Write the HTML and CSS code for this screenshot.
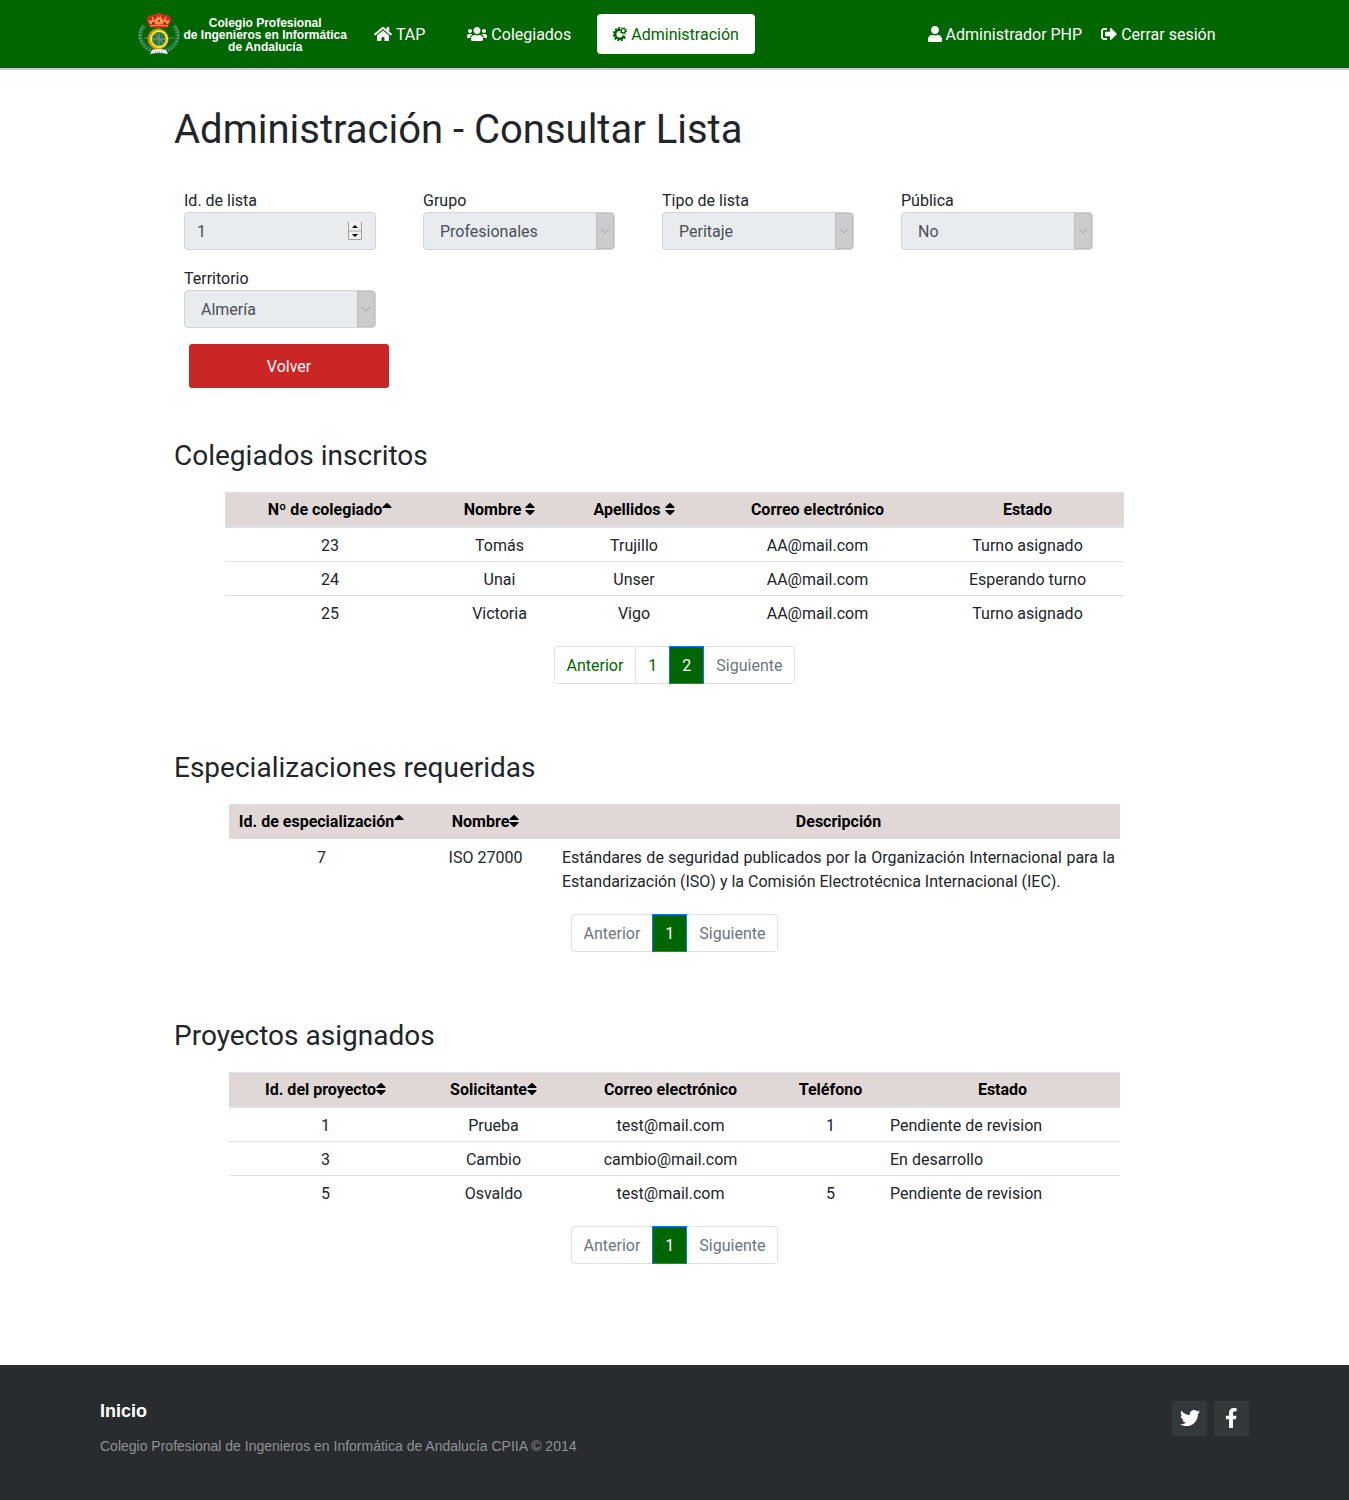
FILE: index.html
```html
<!DOCTYPE html>
<html lang="es">
<head>
<meta charset="utf-8">
<meta name="viewport" content="width=device-width, initial-scale=1">
<title>Administración - Consultar Lista</title>
<link rel="stylesheet" href="styles.css">
</head>
<body>
<svg class="sprite" aria-hidden="true">
  <symbol id="sort" viewBox="0 0 10 16"><path d="M1 7h8q1 0 .5-1L5.700 2.300q-.7-.6-1.400 0L.5 6Q0 7 1 7zM1 9h8q1 0 .5 1L5.700 13.700q-.7.6-1.400 0L.5 10Q0 9 1 9z"/></symbol>
  <symbol id="sort-up" viewBox="0 0 10 16"><path d="M1 7h8q1 0 .5-1L5.700 2.300q-.7-.6-1.400 0L.5 6Q0 7 1 7z"/></symbol>
</svg>

<header class="topbar">
  <div class="topbar-inner">
    <a class="brand" href="#">
      <svg class="brand-emblem" viewBox="0 0 42 44" aria-hidden="true">
        <g fill="none" stroke="#3d8f5f" stroke-width="4" stroke-dasharray="2 1">
          <path d="M6 14C-1 22 2 34 15 39"/><path d="M36 14C43 22 40 34 27 39"/>
        </g>
        <g fill="none" stroke="#8fc0a0" stroke-width="1" stroke-dasharray="1 2">
          <path d="M4 15C-1 23 1 35 14 40"/><path d="M38 15C43 23 41 35 28 40"/>
        </g>
        <path d="M12 15L9 8Q9 3 14 3L19 2 21 0l2 2 5 1q5 0 5 5l-3 7q-9 2-18 0z" fill="#d62a1c"/>
        <path d="M10 8l3 1 1-5 3 5 2-6 2 3 2-3 2 6 3-5 1 5 3-1-2 4H12z" fill="#e8a04a"/>
        <path d="M12 7h2M17 5h2M23 5h2M28 7h2M14 11h3M20 9h2M25 11h3" stroke="#e01818" stroke-width="2"/>
        <path d="M12 14q9-2 18 0" fill="none" stroke="#f3c04c" stroke-width="1"/>
        <path d="M6 26h30M21 15v23" stroke="#6a8a8c" stroke-width="1"/>
        <circle cx="20" cy="27" r="9" fill="#2a7a48" stroke="#d98b18" stroke-width="3"/>
        <path d="M14 27h14M21 21v13M17 22l8 9" stroke="#7f9a96" stroke-width="1"/>
        <circle cx="21" cy="27" r="8" fill="none" stroke="#f8ea1c" stroke-width="2"/>
        <path d="M14 38q7-2 14 0l2 4q-9-2-18 0z" fill="#eee"/>
        <path d="M17 40h8" stroke="#666" stroke-dasharray="1 1"/>
      </svg>
      <span class="brand-name">Colegio Profesional<br>de Ingenieros en Informática<br>de Andalucía</span>
    </a>
    <nav class="nav">
      <a class="nav-link" href="#"><svg class="icon icon-18" viewBox="0 0 576 512" aria-hidden="true"><path d="M280.370 148.260L96 300.110V464a16 16 0 0 0 16 16l112.060-.29a16 16 0 0 0 15.920-16V368a16 16 0 0 1 16-16h64a16 16 0 0 1 16 16v95.640a16 16 0 0 0 16 16.050L464 480a16 16 0 0 0 16-16V300L295.670 148.260a12.190 12.190 0 0 0-15.300 0zM571.600 251.470L488 182.560V44.050a12 12 0 0 0-12-12h-56a12 12 0 0 0-12 12v72.610L318.470 43a48 48 0 0 0-61 0L4.340 251.470a12 12 0 0 0-1.600 16.900l25.500 31A12 12 0 0 0 45.150 301l235.220-193.740a12.190 12.190 0 0 1 15.300 0L530.900 301a12 12 0 0 0 16.900-1.600l25.500-31a12 12 0 0 0-1.700-16.930z"/></svg>TAP</a>
      <a class="nav-link" href="#"><svg class="icon icon-20" viewBox="0 0 640 512" aria-hidden="true"><path d="M96 224c35.300 0 64-28.700 64-64s-28.700-64-64-64-64 28.700-64 64 28.700 64 64 64zm448 0c35.300 0 64-28.700 64-64s-28.700-64-64-64-64 28.700-64 64 28.700 64 64 64zm32 32h-64c-17.600 0-33.500 7.100-45.100 18.600 40.300 22.100 68.900 62 75.100 109.400h66c17.700 0 32-14.300 32-32v-32c0-35.300-28.700-64-64-64zm-256 0c61.900 0 112-50.100 112-112S381.900 32 320 32 208 82.100 208 144s50.100 112 112 112zm76.800 32h-8.300c-20.800 10-43.900 16-68.500 16s-47.600-6-68.500-16h-8.300C179.600 288 128 339.600 128 403.200V432c0 26.500 21.500 48 48 48h288c26.500 0 48-21.500 48-48v-28.800c0-63.600-51.600-115.200-115.200-115.200zm-223.700-13.400C161.500 263.100 145.600 256 128 256H64c-35.300 0-64 28.700-64 64v32c0 17.700 14.300 32 32 32h65.900c6.300-47.400 34.900-87.300 75.200-109.400z"/></svg>Colegiados</a>
      <a class="nav-link active" href="#" aria-current="page"><svg class="icon icon-14" viewBox="0 0 14 16" aria-hidden="true"><g fill="none" stroke="currentColor"><path d="M7 3.800A4.500 4.500 0 1 0 11 9.500" stroke-width="2.600"/><path d="M7 2A6.200 6.200 0 1 0 12.800 9.500" stroke-width="1.800" stroke-dasharray="1.900 1.500"/><circle cx="10.300" cy="4.800" r="2.100" stroke-width="1.300"/><circle cx="10.300" cy="4.800" r="3.100" stroke-width="1.100" stroke-dasharray="1.300 1.130"/></g></svg>Administración</a>
    </nav>
    <nav class="account">
      <a class="account-link" href="#"><svg class="icon icon-14" viewBox="0 0 448 512" aria-hidden="true"><path d="M224 256c70.700 0 128-57.300 128-128S294.700 0 224 0 96 57.300 96 128s57.300 128 128 128zm89.600 32h-16.700c-22.200 10.200-46.900 16-72.900 16s-50.600-5.800-72.900-16h-16.700C60.200 288 0 348.200 0 422.400V464c0 26.500 21.500 48 48 48h352c26.500 0 48-21.500 48-48v-41.600c0-74.200-60.200-134.400-134.400-134.400z"/></svg>Administrador PHP</a>
      <a class="account-link" href="#"><svg class="icon icon-16" viewBox="0 0 512 512" aria-hidden="true"><path d="M497 273L329 441c-15 15-41 4.500-41-17v-96H152c-13.300 0-24-10.700-24-24v-96c0-13.300 10.700-24 24-24h136V88c0-21.400 25.900-32 41-17l168 168c9.300 9.400 9.300 24.600 0 34zM192 436v-40c0-6.600-5.400-12-12-12H96c-17.700 0-32-14.300-32-32V160c0-17.700 14.300-32 32-32h84c6.600 0 12-5.400 12-12V76c0-6.600-5.400-12-12-12H96c-53 0-96 43-96 96v192c0 53 43 96 96 96h84c6.600 0 12-5.400 12-12z"/></svg>Cerrar sesión</a>
    </nav>
  </div>
</header>

<main class="content">
  <h1>Administración - Consultar Lista</h1>

  <form class="filters">
    <div class="field">
      <label for="id-lista">Id. de lista</label>
      <div class="control">
        <input class="box" id="id-lista" type="number" value="1" disabled>
        <svg class="spinner" viewBox="0 0 14 18" aria-hidden="true"><path d="M0 0h14v18H0z" fill="#f0f0f0"/><path d="M.5 0v17.500h13V0M0 9h14" fill="none" stroke="#a0a0a0"/><path d="M4 6h6L7 3zM4 12h6l-3 3z" fill="#000"/></svg>
      </div>
    </div>
    <div class="field">
      <label for="grupo">Grupo</label>
      <div class="control">
        <select class="box" id="grupo" disabled><option>Profesionales</option></select>
        <span class="arrow"><svg viewBox="0 0 10 6" aria-hidden="true"><path d="M1 1l4 4 4-4"/></svg></span>
      </div>
    </div>
    <div class="field">
      <label for="tipo">Tipo de lista</label>
      <div class="control">
        <select class="box" id="tipo" disabled><option>Peritaje</option></select>
        <span class="arrow"><svg viewBox="0 0 10 6" aria-hidden="true"><path d="M1 1l4 4 4-4"/></svg></span>
      </div>
    </div>
    <div class="field">
      <label for="publica">Pública</label>
      <div class="control">
        <select class="box" id="publica" disabled><option>No</option></select>
        <span class="arrow"><svg viewBox="0 0 10 6" aria-hidden="true"><path d="M1 1l4 4 4-4"/></svg></span>
      </div>
    </div>
    <div class="field">
      <label for="territorio">Territorio</label>
      <div class="control">
        <select class="box" id="territorio" disabled><option>Almería</option></select>
        <span class="arrow"><svg viewBox="0 0 10 6" aria-hidden="true"><path d="M1 1l4 4 4-4"/></svg></span>
      </div>
    </div>
  </form>
  <button class="back" type="button">Volver</button>

  <section>
    <h2>Colegiados inscritos</h2>
    <table class="grid grid-wide">
      <colgroup><col class="w-210"><col class="w-129"><col class="w-140"><col class="w-227"><col></colgroup>
      <thead>
        <tr>
          <th>Nº de colegiado<svg class="sort"><use href="#sort-up"/></svg></th>
          <th>Nombre <svg class="sort"><use href="#sort"/></svg></th>
          <th>Apellidos <svg class="sort"><use href="#sort"/></svg></th>
          <th>Correo electrónico</th>
          <th>Estado</th>
        </tr>
      </thead>
      <tbody>
        <tr><td>23</td><td>Tomás</td><td>Trujillo</td><td>AA@mail.com</td><td>Turno asignado</td></tr>
        <tr><td>24</td><td>Unai</td><td>Unser</td><td>AA@mail.com</td><td>Esperando turno</td></tr>
        <tr><td>25</td><td>Victoria</td><td>Vigo</td><td>AA@mail.com</td><td>Turno asignado</td></tr>
      </tbody>
    </table>
    <nav class="pager" aria-label="Páginas de colegiados">
      <a class="page" href="#">Anterior</a><a class="page" href="#">1</a><a class="page current" href="#" aria-current="page">2</a><span class="page off">Siguiente</span>
    </nav>
  </section>

  <section>
    <h2>Especializaciones requeridas</h2>
    <table class="grid grid-plain">
      <colgroup><col class="w-185"><col class="w-143"><col></colgroup>
      <thead>
        <tr>
          <th>Id. de especialización<svg class="sort"><use href="#sort-up"/></svg></th>
          <th>Nombre<svg class="sort"><use href="#sort"/></svg></th>
          <th>Descripción</th>
        </tr>
      </thead>
      <tbody>
        <tr><td>7</td><td>ISO 27000</td><td class="prose">Estándares de seguridad publicados por la Organización Internacional para la Estandarización (ISO) y la Comisión Electrotécnica Internacional (IEC).</td></tr>
      </tbody>
    </table>
    <nav class="pager" aria-label="Páginas de especializaciones">
      <span class="page off">Anterior</span><a class="page current" href="#" aria-current="page">1</a><span class="page off">Siguiente</span>
    </nav>
  </section>

  <section>
    <h2>Proyectos asignados</h2>
    <table class="grid">
      <colgroup><col class="w-193"><col class="w-143"><col class="w-211"><col class="w-109"><col></colgroup>
      <thead>
        <tr>
          <th>Id. del proyecto<svg class="sort"><use href="#sort"/></svg></th>
          <th>Solicitante<svg class="sort"><use href="#sort"/></svg></th>
          <th>Correo electrónico</th>
          <th>Teléfono</th>
          <th>Estado</th>
        </tr>
      </thead>
      <tbody>
        <tr><td>1</td><td>Prueba</td><td>test@mail.com</td><td>1</td><td class="prose">Pendiente de revision</td></tr>
        <tr><td>3</td><td>Cambio</td><td>cambio@mail.com</td><td></td><td class="prose">En desarrollo</td></tr>
        <tr><td>5</td><td>Osvaldo</td><td>test@mail.com</td><td>5</td><td class="prose">Pendiente de revision</td></tr>
      </tbody>
    </table>
    <nav class="pager" aria-label="Páginas de proyectos">
      <span class="page off">Anterior</span><a class="page current" href="#" aria-current="page">1</a><span class="page off">Siguiente</span>
    </nav>
  </section>
</main>

<footer class="footer">
  <div>
    <a class="footer-home" href="#">Inicio</a>
    <p class="footer-note">Colegio Profesional de Ingenieros en Informática de Andalucía CPIIA © 2014</p>
  </div>
  <div class="social">
    <a href="#" aria-label="Twitter"><svg viewBox="0 0 512 512" aria-hidden="true"><path d="M459.370 151.716c.325 4.548.325 9.097.325 13.645 0 138.720-105.583 298.558-298.558 298.558-59.452 0-114.680-17.219-161.137-47.106 8.447.974 16.568 1.299 25.340 1.299 49.055 0 94.213-16.568 130.274-44.832-46.132-.975-84.792-31.188-98.112-72.772 6.498.974 12.995 1.624 19.818 1.624 9.421 0 18.843-1.300 27.614-3.573-48.081-9.747-84.143-51.980-84.143-102.985v-1.299c13.969 7.797 30.214 12.670 47.431 13.319-28.264-18.843-46.781-51.005-46.781-87.391 0-19.492 5.197-37.360 14.294-52.954 51.655 63.675 129.300 105.258 216.365 109.807-1.624-7.797-2.599-15.918-2.599-24.040 0-57.828 46.782-104.934 104.934-104.934 30.213 0 57.502 12.670 76.670 33.137 23.715-4.548 46.456-13.320 66.599-25.340-7.798 24.366-24.366 44.833-46.132 57.827 21.117-2.273 41.584-8.122 60.426-16.243-14.292 20.791-32.161 39.308-52.628 54.253z"/></svg></a>
    <a href="#" aria-label="Facebook"><svg viewBox="0 0 320 512" aria-hidden="true"><path d="M279.140 288l14.220-92.660h-88.910v-60.130c0-25.350 12.420-50.060 52.240-50.060h40.420V6.260S260.430 0 225.360 0c-73.220 0-121.080 44.380-121.080 124.720v70.620H22.890V288h81.390v224h100.170V288z"/></svg></a>
  </div>
</footer>
</body>
</html>
```
FILE: styles.css
```css
*, *::before, *::after { box-sizing: border-box; }

body {
  margin: 0;
  min-height: 100vh;
  display: flex;
  flex-direction: column;
  background: #fff;
  color: #212529;
  font: 16px/24px Roboto, sans-serif;
}

a { color: inherit; text-decoration: none; }
.sprite { display: none; }

/* Top bar */
.topbar {
  background: #006600;
  border-bottom: 2px solid #ccc;
  color: #fff;
}
.topbar-inner {
  max-width: 1110px;
  min-height: 68px;
  margin: 0 auto;
  padding: 0 14px 0 18px;
  display: flex;
  align-items: center;
}
.brand { display: flex; align-items: center; gap: 4px; }
.brand-emblem { width: 42px; height: 44px; }
.brand-name {
  padding-top: 2px;
  font: bold 12px/12px "Liberation Sans", Arial, sans-serif;
  text-align: center;
  white-space: nowrap;
}
.nav { display: flex; gap: 10px; margin-left: 11px; }
.nav-link {
  display: flex;
  align-items: center;
  gap: 4px;
  padding: 9px 16px 7px;
  border-radius: 4px;
}
.nav-link.active { background: #fff; color: #006600; }
.account { display: flex; gap: 19px; margin-left: auto; padding-top: 2px; }
.account-link { display: flex; align-items: center; gap: 4px; }
.icon { height: 16px; margin-bottom: 2px; fill: currentColor; }
.icon-14 { width: 14px; }
.icon-16 { width: 16px; }
.icon-18 { width: 18px; }
.icon-20 { width: 20px; }

/* Page */
.content {
  width: 100%;
  max-width: 1001px;
  margin: 0 auto;
  padding: 35px 0 101px;
  flex: 1 0 auto;
}
h1 { margin: 0 0 35px; font-size: 40px; line-height: 50px; font-weight: 400; }
h2 { margin: 0 0 18px; font-size: 28px; line-height: 36px; font-weight: 400; }
section + section { margin-top: 66px; }

/* Filters */
.filters {
  display: grid;
  grid-template-columns: repeat(auto-fill, 192px);
  gap: 18px 47px;
  padding: 0 10px;
}
.field label { display: block; line-height: 22px; }
.control { position: relative; }
.box {
  display: block;
  width: 100%;
  height: 38px;
  padding: 0 12px;
  border: 1px solid #ced4da;
  border-radius: 4px;
  background: #e9ecef;
  color: #495057;
  font: inherit;
  opacity: 1;
  appearance: none;
  -moz-appearance: textfield;
}
.box::-webkit-inner-spin-button { display: none; }
select.box { padding: 2px 16px 0; }
.spinner { position: absolute; right: 14px; top: 10px; width: 14px; height: 18px; }
.arrow {
  position: absolute;
  inset: 1px 1px 1px auto;
  width: 18px;
  display: flex;
  align-items: center;
  justify-content: center;
  border: 1px solid #bfbfbf;
  border-radius: 0 3px 3px 0;
  background: #ccc;
}
.arrow svg { width: 10px; height: 6px; fill: none; stroke: #a3a3a3; }
.back {
  display: block;
  width: 200px;
  height: 44px;
  margin: 16px 0 50px 15px;
  padding: 2px 0 0;
  border: 0;
  border-radius: 3px;
  background: #cb2626;
  color: #fff;
  font: inherit;
}

/* Tables */
.grid {
  width: 891px;
  max-width: 100%;
  margin: 0 auto;
  table-layout: fixed;
  border-collapse: separate;
  border-spacing: 0;
  text-align: center;
}
.grid-wide { width: 899px; }
.grid th, .grid td { border-top: 1px solid #dee2e6; }
.grid th {
  padding: 5px 5px 4px;
  background: #e0d8d7;
  border-bottom: 1px solid #dee2e6;
  color: #000;
  font-weight: 700;
  white-space: nowrap;
}
.grid td { padding: 6px 5px 3px; }
.grid-plain th { border-bottom-color: #e0d8d7; }
.grid-plain td { border-top-color: transparent; vertical-align: top; }
.grid .prose { text-align: justify; }
.sort { width: 10px; height: 16px; vertical-align: -2px; }
.w-109 { width: 109px; }
.w-129 { width: 129px; }
.w-140 { width: 140px; }
.w-143 { width: 143px; }
.w-185 { width: 185px; }
.w-193 { width: 193px; }
.w-210 { width: 210px; }
.w-211 { width: 211px; }
.w-227 { width: 227px; }

/* Pagination */
.pager { display: flex; justify-content: center; margin-top: 17px; }
.page {
  padding: 7px 12px 5px;
  border: 1px solid #dee2e6;
  background: #fff;
  color: #006600;
}
.page + .page { margin-left: -1px; }
.page:first-child { border-radius: 4px 0 0 4px; }
.page:last-child { border-radius: 0 4px 4px 0; }
.page.current { z-index: 1; background: #006600; border-color: #007bff; color: #fff; }
.page.off { color: #6c757d; }

/* Footer */
.footer {
  display: flex;
  justify-content: space-between;
  align-items: flex-start;
  padding: 36px 100px 42px;
  background: #292c2f;
  font-family: "Liberation Sans", Arial, sans-serif;
}
.footer-home { display: block; color: #fff; font-size: 18px; line-height: 20px; font-weight: 700; }
.footer-note { margin: 13px 0 0; color: #8f9296; font-size: 14px; line-height: 24px; }
.social { display: flex; gap: 7px; }
.social a {
  width: 35px;
  height: 35px;
  padding-bottom: 2px;
  display: flex;
  align-items: center;
  justify-content: center;
  border-radius: 2px;
  background: #33383b;
}
.social svg { height: 20px; fill: #fff; }
```
